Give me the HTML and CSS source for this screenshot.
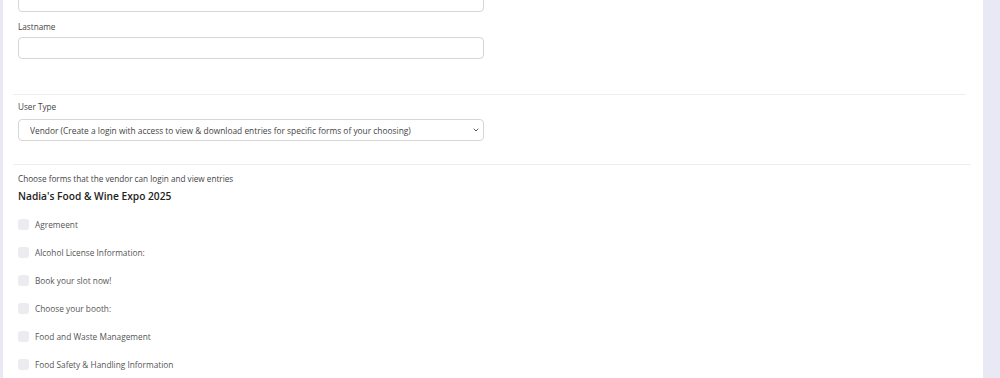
FILE: index.html
```html
<!DOCTYPE html>
<html lang="en">
<head>
    <meta charset="UTF-8">
    <meta name="viewport" content="width=device-width, initial-scale=1.0">
    <title>Add User</title>
    <link rel="stylesheet" href="styles.css">
</head>
<body>
    <div class="panel">
        <div class="section">
            <input type="text" class="field first-field">
            <label class="field-label" for="lastname">Lastname</label>
            <input type="text" id="lastname" class="field">
        </div>

        <hr class="divider divider-short">

        <div class="section">
            <label class="field-label label-type" for="userType">User Type</label>
            <div class="select-wrap">
                <select id="userType" class="field select">
                    <option>Vendor (Create a login with access to view &amp; download entries for specific forms of your choosing)</option>
                </select>
                <svg class="chevron" width="6" height="4" viewBox="0 0 6 4"><path d="M1 1 L3 3 L5 1" fill="none" stroke="#555" stroke-width="1" stroke-linecap="round" stroke-linejoin="round"/></svg>
            </div>
        </div>

        <hr class="divider divider-long">

        <div class="section">
            <div class="field-label label-forms">Choose forms that the vendor can login and view entries</div>
            <h2 class="event-title">Nadia's Food &amp; Wine Expo 2025</h2>
            <ul class="form-list">
                <li><input type="checkbox" class="check"><span>Agremeent</span></li>
                <li><input type="checkbox" class="check"><span>Alcohol License Information:</span></li>
                <li><input type="checkbox" class="check"><span>Book your slot now!</span></li>
                <li><input type="checkbox" class="check"><span>Choose your booth:</span></li>
                <li><input type="checkbox" class="check"><span>Food and Waste Management</span></li>
                <li><input type="checkbox" class="check"><span>Food Safety &amp; Handling Information</span></li>
            </ul>
        </div>
    </div>
</body>
</html>
```

FILE: styles.css
```css
html, body {
    margin: 0;
    padding: 0;
    height: 100%;
    overflow: hidden;
}
body {
    background-color: #e9e9f5;
    font-family: 'Open Sans', 'Liberation Sans', sans-serif;
    color: #444;
}
.panel {
    display: flow-root;
    margin-left: 3px;
    width: 980px;
    height: 100%;
    background-color: white;
    padding-left: 10px;
    box-sizing: border-box;
}
.section {
    padding-left: 5px;
    width: 466px;
}
.field {
    display: block;
    width: 466px;
    height: 22px;
    border: 1px solid #d6d6d6;
    border-radius: 4px;
    box-sizing: border-box;
    background: white;
    margin: 0;
}
.first-field {
    margin-top: -10px;
}
.field-label {
    display: block;
    font-size: 8.2px;
    line-height: 12px;
    color: #444;
    margin-top: 9px;
    margin-bottom: 4px;
}
.divider {
    border: none;
    border-top: 1px solid #eeeeee;
    margin: 35px 0 0 0;
    height: 0;
}
.divider-short {
    width: 953px;
}
.divider-long {
    width: 958px;
    margin-top: 23px;
}
.label-type {
    margin-top: 6px;
    margin-bottom: 6px;
}
.select-wrap {
    position: relative;
}
.select {
    appearance: none;
    -webkit-appearance: none;
    font-family: 'Open Sans', 'Liberation Sans', sans-serif;
    font-size: 8.4px;
    color: #444;
    padding-left: 11px;
    outline: none;
}
.chevron {
    position: absolute;
    right: 5px;
    top: 9px;
}
.label-forms {
    margin-top: 8px;
    margin-bottom: 4px;
}
.event-title {
    font-size: 10.2px;
    line-height: 14px;
    font-weight: 600;
    color: #222;
    margin: 0 0 7px 0;
}
.form-list {
    list-style: none;
    margin: 0;
    padding: 0;
}
.form-list li {
    display: flex;
    align-items: center;
    height: 28px;
    font-size: 8.3px;
    color: #555;
}
.check {
    appearance: none;
    -webkit-appearance: none;
    width: 11px;
    height: 11px;
    margin: 0 6px 0 0;
    border-radius: 3px;
    background-color: #ebebf0;
    border: none;
}
```
